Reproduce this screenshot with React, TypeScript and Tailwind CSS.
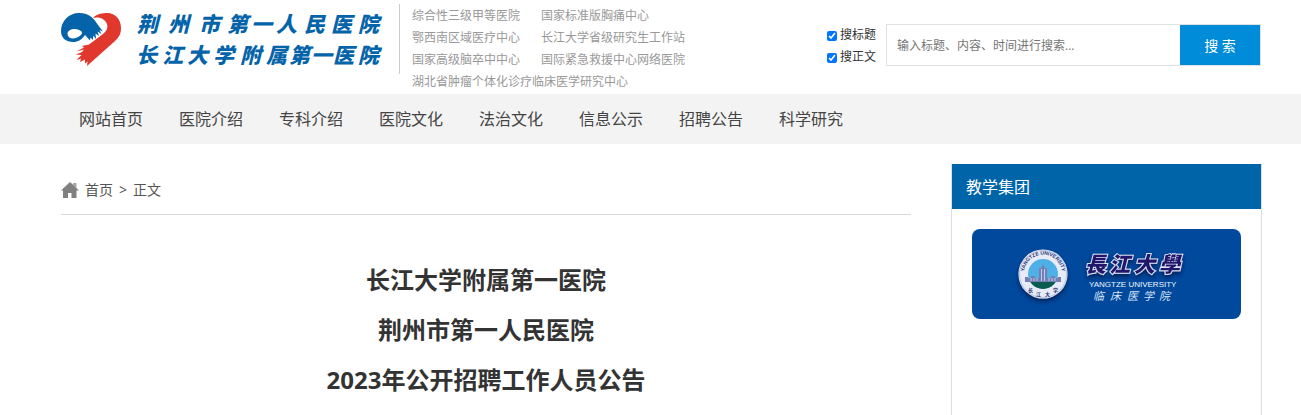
import { useState } from 'react';

const honors = [
  ['综合性三级甲等医院', '国家标准版胸痛中心'],
  ['鄂西南区域医疗中心', '长江大学省级研究生工作站'],
  ['国家高级脑卒中中心', '国际紧急救援中心网络医院'],
];

const navItems = ['网站首页', '医院介绍', '专科介绍', '医院文化', '法治文化', '信息公示', '招聘公告', '科学研究'];

const titleLines = ['长江大学附属第一医院', '荆州市第一人民医院', '2023年公开招聘工作人员公告'];

function HospitalLogo() {
  return (
    <svg viewBox="0 -13 324 76" className="h-[76px] w-[324px] shrink-0" role="img" aria-label="荆州市第一人民医院 长江大学附属第一医院">
      <path
        fill="#e1382d"
        d="M32 5 C36 0.500 42 0 46 0 C55 0 60 7 60 15 C60 21 58 24 54 28 L26 53 L26.500 48.500 L24 50.500 L24 46.500 L19 49 L20 45.500 L15.500 47 L20.500 42 L15 41.500 L21 39 L23 36.500 L15.500 38.500 L23 34.500 L21 33 L28 31.500 L42 21 C46 18 47.500 14 45.500 10 C43 5 37 3.500 32 5 Z"
      />
      <path
        fill="#0564a9"
        fillRule="evenodd"
        d="M0 18 C0 8 8 0 18 0 C29 0 33 6 37 12 L42 18.500 L38.500 17 L40.500 21 L36.500 18.500 L38 23 L34.500 20.500 L35 26 L32 22.500 L32 27 L29.500 24.500 L29 27.500 L24 22 C21 26.500 17 29 12 29 C5 29 0 25 0 18 Z M6.500 21 C7 25.500 12 26.500 16 24.500 C19.500 23 22 20.500 20.500 18.500 C17 14.500 6.500 15 6.500 21 Z"
      />
      <g fill="#0564a9" fontFamily='"Noto Sans CJK SC", sans-serif' fontSize="21" fontWeight="900" fontStyle="italic">
        <text x="76 107 138 166 190 215 243 270 297" y="19">荆州市第一人民医院</text>
        <text x="75 101 126 152 179 205 228 250 272 297" y="50">长江大学附属第一医院</text>
      </g>
    </svg>
  );
}

function HomeIcon() {
  return (
    <svg viewBox="0 0 18 16" className="h-4 w-[18px]" aria-hidden="true">
      <path fill="#a6a6a6" d="M12 1 H15.500 V6 L12 3 Z" />
      <path fill="#808080" d="M9 0 L0 8.500 H2 V16 H7 V11 H10.500 V16 H15.500 V8.500 H18 Z" />
    </svg>
  );
}

function UniversityBanner() {
  return (
    <svg viewBox="0 0 269 90" className="w-full rounded-lg bg-[#00499d]" role="img" aria-label="长江大学临床医学院">
      <defs>
        <path id="seal-arc" d="M52.500 49 A19 19 0 1 1 89.500 49" />
        <clipPath id="seal-core">
          <circle cx="71" cy="45" r="15" />
        </clipPath>
        <filter id="seal-shadow" x="-20%" y="-20%" width="150%" height="160%">
          <feDropShadow dx="0" dy="3" stdDeviation="2" floodColor="#001a4d" floodOpacity="0.8" />
        </filter>
      </defs>
      <circle cx="71" cy="45" r="24.500" fill="#e6ebf7" filter="url(#seal-shadow)" />
      <circle cx="71" cy="45" r="23.500" fill="none" stroke="#b9c5e2" />
      <g clipPath="url(#seal-core)">
        <rect x="56" y="30" width="30" height="30" fill="#4fb0e8" />
        <rect x="56" y="52" width="30" height="12" fill="#0b5b50" />
      </g>
      <path fill="#7480b3" d="M53 48 h3 v1 h3 v-2 h4 v2 h4 v-10 h2 l2 -4 l2 4 h2 v10 h4 v-2 h4 v2 h3 v-1 h3 v5 h-36 Z" />
      <path stroke="#c3cdea" strokeWidth="1" d="M59 49 v3 M62 49 v3 M65 49 v3 M69.500 40 v12 M72.500 40 v12 M77 49 v3 M80 49 v3 M83 49 v3" />
      <text fontFamily='"Liberation Sans", sans-serif' fontSize="5" fontWeight="700" fill="#25306f">
        <textPath href="#seal-arc" startOffset="50%" textAnchor="middle">
          YANGTZE UNIVERSITY
        </textPath>
      </text>
      <g fontFamily='"Noto Sans CJK SC", sans-serif' fontSize="5" fontWeight="700" fill="#25306f">
        <text x="56 64 73 81" y="63 67 67 63">长江大学</text>
      </g>
      <text
        x="113 137 162 187"
        y="43"
        fontFamily='"Noto Sans CJK SC", sans-serif'
        fontSize="21"
        fontWeight="900"
        fontStyle="italic"
        fill="#20146b"
        stroke="#dfe4f4"
        strokeWidth="2"
        paintOrder="stroke"
        filter="url(#seal-shadow)"
      >
        長江大學
      </text>
      <text x="117" y="58" fontFamily='"Liberation Sans", sans-serif' fontSize="8" fill="#f1f5fc">YANGTZE UNIVERSITY</text>
      <text x="121 138 155 171 187" y="71" fontFamily='"Noto Sans CJK SC", sans-serif' fontSize="11" fontStyle="italic" fill="#d7e3f5">
        临床医学院
      </text>
    </svg>
  );
}

function SearchForm() {
  const [inTitle, setInTitle] = useState(true);
  const [inBody, setInBody] = useState(true);
  const [keyword, setKeyword] = useState('');

  return (
    <form className="mt-6 flex items-start" onSubmit={(e) => e.preventDefault()}>
      <div className="mr-[10px] text-xs leading-[22px] text-[#333]">
        <label className="flex items-center gap-[3px]">
          <input type="checkbox" className="mt-[2px] size-[10px] accent-[#0075ff]" checked={inTitle} onChange={(e) => setInTitle(e.target.checked)} />
          搜标题
        </label>
        <label className="flex items-center gap-[3px]">
          <input type="checkbox" className="mt-[2px] size-[10px] accent-[#0075ff]" checked={inBody} onChange={(e) => setInBody(e.target.checked)} />
          搜正文
        </label>
      </div>
      <div className="flex h-[42px] w-[375px] border border-[#e1e1e1]">
        <input
          type="text"
          className="min-w-0 flex-1 px-[10px] pt-[2px] text-xs outline-none placeholder:text-[#757575]"
          placeholder="输入标题、内容、时间进行搜索..."
          aria-label="搜索"
          value={keyword}
          onChange={(e) => setKeyword(e.target.value)}
        />
        <button type="submit" className="w-20 cursor-pointer bg-[#008cd9] pt-[2px] text-sm text-white">
          搜 索
        </button>
      </div>
    </form>
  );
}

export default function App() {
  return (
    <div className="flex min-h-screen flex-col bg-white font-['Open_Sans','Noto_Sans_CJK_SC',sans-serif]">
      <header className="flex h-[94px] items-start pr-10 pl-[61px]">
        <a href="#" className="mr-[14px] block">
          <HospitalLogo />
        </a>
        <div className="mt-1 h-[70px] border-l border-[#ccc] pt-px pl-3 text-xs leading-[22px] text-[#999]">
          {honors.map(([left, right]) => (
            <p key={left} className="flex gap-[21px]">
              <span>{left}</span>
              <span>{right}</span>
            </p>
          ))}
          <p>湖北省肿瘤个体化诊疗临床医学研究中心</p>
        </div>
        <div className="ml-auto">
          <SearchForm />
        </div>
      </header>

      <nav className="bg-[#f3f3f3] pr-10 pl-[61px]">
        <ul className="flex">
          {navItems.map((item) => (
            <li key={item}>
              <a href="#" className="block px-[18px] text-base leading-[50px] text-[#444]">
                {item}
              </a>
            </li>
          ))}
        </ul>
      </nav>

      <div className="flex flex-1 gap-10 pt-5 pr-[39px] pl-[61px]">
        <main className="min-w-0 flex-1">
          <div className="flex h-[51px] items-center gap-[6px] border-b border-[#d9d9d9] pt-[2px] text-sm text-[#555]">
            <HomeIcon />
            <p className="flex gap-[6px]">
              <a href="#">首页</a>
              <span>&gt;</span>
              <a href="#">正文</a>
            </p>
          </div>
          <h1 className="pt-10 text-center text-2xl leading-[50px] font-bold text-[#333]">
            {titleLines.map((line) => (
              <span key={line} className="block">
                {line}
              </span>
            ))}
          </h1>
        </main>
        <aside className="w-[311px] shrink-0 border-x border-[#ddd]">
          <h2 className="bg-[#0064a8] px-[14px] pt-px text-base leading-[44px] text-white">教学集团</h2>
          <a href="#" className="block p-5">
            <UniversityBanner />
          </a>
        </aside>
      </div>
    </div>
  );
}
